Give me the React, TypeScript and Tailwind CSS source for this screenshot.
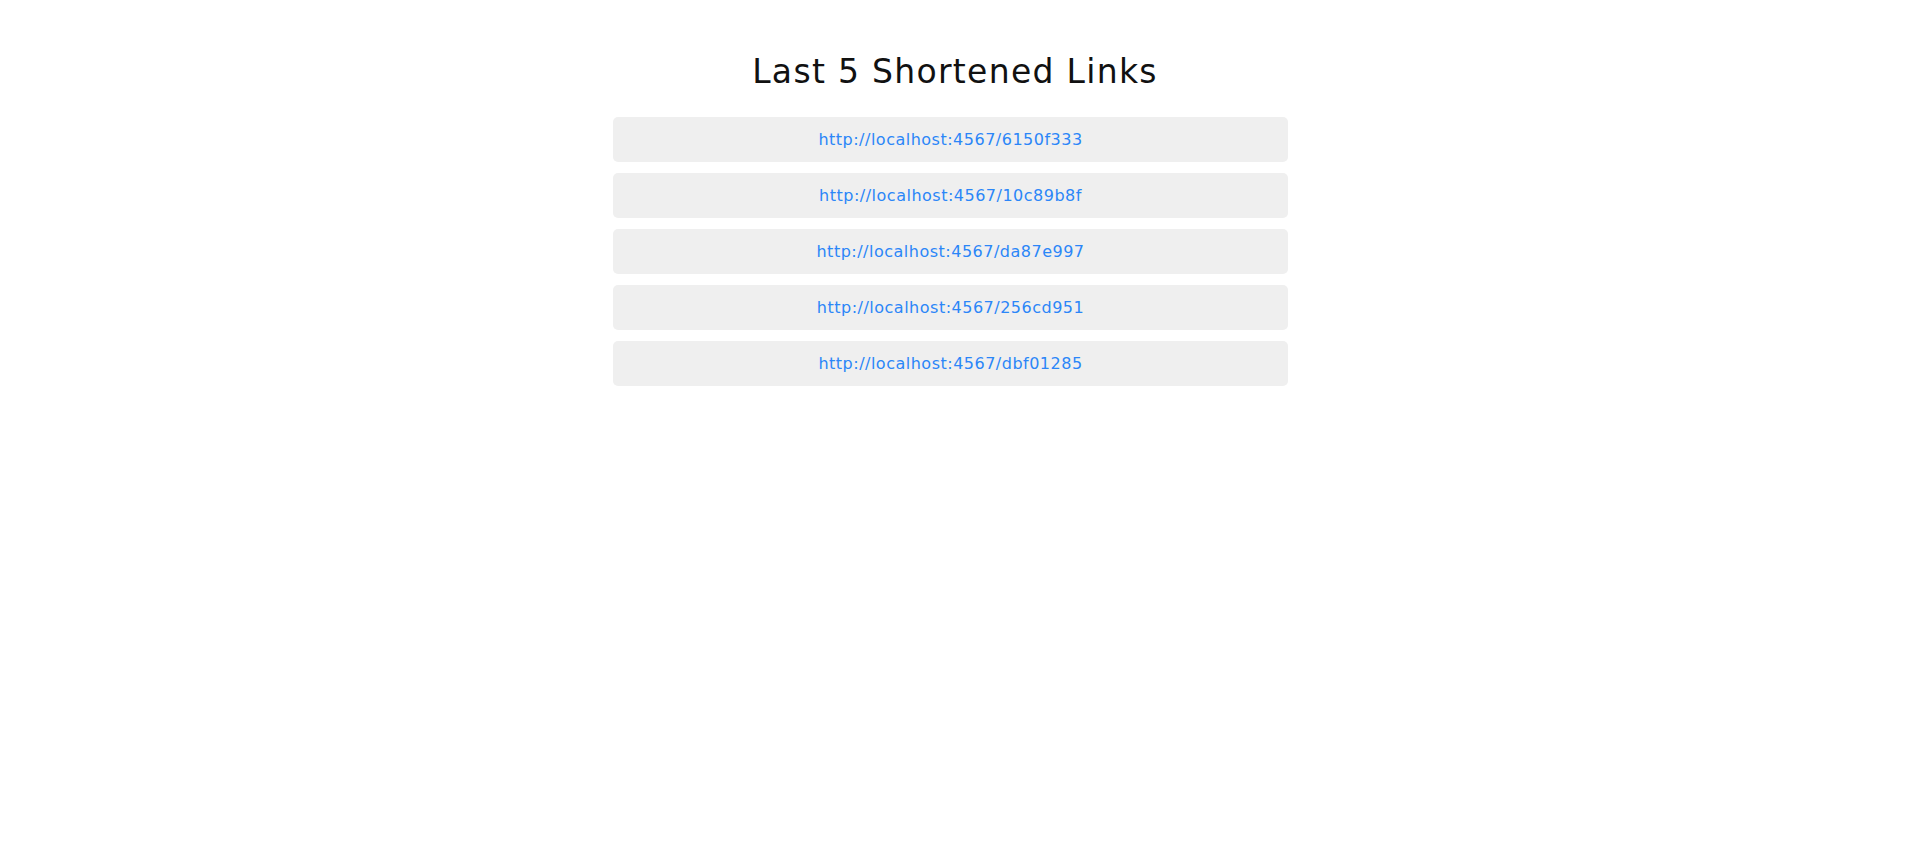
const links = [
  'http://localhost:4567/6150f333',
  'http://localhost:4567/10c89b8f',
  'http://localhost:4567/da87e997',
  'http://localhost:4567/256cd951',
  'http://localhost:4567/dbf01285',
];

export default function App() {
  return (
    <div className="min-h-screen w-full bg-white font-['DejaVu_Sans',sans-serif] text-black">
      <div className="flex flex-col items-center pt-[52px]">
        <h1 className="text-[33px] leading-[40px] font-normal tracking-[1.3px] text-[#111]">
          Last 5 Shortened Links
        </h1>
        <ul className="mt-[25px] mr-[9px] flex w-[675px] flex-col gap-[11px]">
          {links.map((link) => (
            <li
              key={link}
              className="rounded-[5px] bg-[#efefef] py-[10px] text-center text-[16px] leading-[25px]"
            >
              <a href="#" className="tracking-[0.5px] text-[#2b86f8]">
                {link}
              </a>
            </li>
          ))}
        </ul>
      </div>
    </div>
  );
}
